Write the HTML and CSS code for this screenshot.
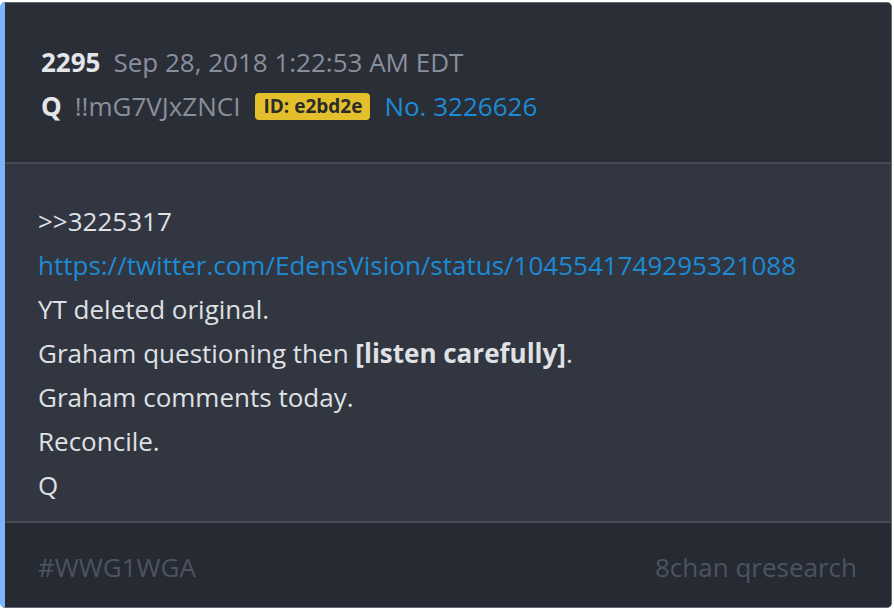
FILE: index.html
```html
<!DOCTYPE html>
<html>
<head>
<meta charset="utf-8">
<link rel="stylesheet" href="styles.css">
</head>
<body>
<div class="card">
  <div class="head">
    <div class="line"><span class="num">2295</span><span class="date">Sep 28, 2018 1:22:53 AM EDT</span></div>
    <div class="line"><span class="num">Q</span><span class="trip">!!mG7VJxZNCI</span><span class="badge">ID: e2bd2e</span><span class="no">No. 3226626</span></div>
  </div>
  <div class="body">
    <div>&gt;&gt;3225317</div>
    <div class="link">https://twitter.com/EdensVision/status/1045541749295321088</div>
    <div>YT deleted original.</div>
    <div>Graham questioning then <b>[listen carefully]</b>.</div>
    <div>Graham comments today.</div>
    <div>Reconcile.</div>
    <div>Q</div>
  </div>
  <div class="foot">
    <span>#WWG1WGA</span>
    <span>8chan qresearch</span>
  </div>
</div>
</body>
</html>
```
FILE: styles.css
```css
html, body { margin: 0; padding: 0; background: #ffffff; }
body { font-family: "Open Sans", "Noto Sans", sans-serif; }
.card {
  margin-top: 2px;
  width: 892px;
  height: 606px;
  box-sizing: border-box;
  border: 1px solid #646a78;
  border-left: 5px solid #7ab6fb;
  border-radius: 5px;
  background: #313641;
  display: flex;
  flex-direction: column;
  overflow: hidden;
}
.head {
  background: #2a2e37;
  padding: 37px 32px 34px 36px;
  border-bottom: 2px solid #454a55;
}
.line { font-size: 26px; line-height: 44px; color: #8a8f9c; display: flex; align-items: center; white-space: nowrap; }
.num { font-weight: 700; color: #e4e6ea; margin-right: 13px; }
.trip { margin-right: 15px; }
.badge {
  background: #e4bf2c;
  color: #2b2b2b;
  font-weight: 700;
  font-size: 19px;
  line-height: 27px;
  padding: 0 8px;
  border-radius: 4px;
  margin-right: 14px;
}
.no { color: #1c8bd4; }
.body {
  flex: 1;
  padding: 35px 32px 13px 33px;
  border-bottom: 2px solid #454a55;
  font-size: 26px;
  line-height: 44px;
  color: #dfe1e5;
}
.body b { font-weight: 700; }
.link { color: #1c8bd4; }
.foot {
  background: #262a33;
  height: 84px;
  box-sizing: border-box;
  padding: 4px 34px 0 33px;
  display: flex;
  align-items: center;
  justify-content: space-between;
  font-size: 26px;
  color: #4d5361;
}
```
